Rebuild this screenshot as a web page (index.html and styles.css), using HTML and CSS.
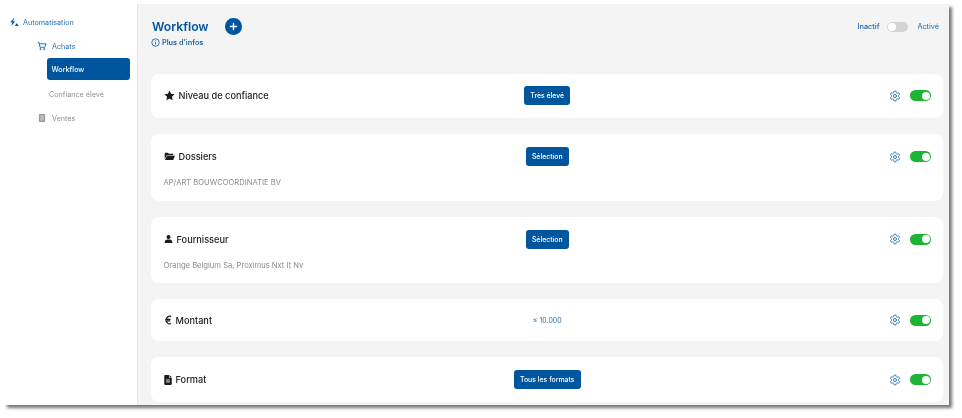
FILE: index.html
```html
<!DOCTYPE html>
<html lang="fr">
<head>
<meta charset="utf-8">
<title>Workflow</title>
<link rel="stylesheet" href="styles.css">
</head>
<body>
<svg class="defs" aria-hidden="true">
  <symbol id="gear" viewBox="0 0 24 24"><path d="M12.220 2h-.44a2 2 0 0 0-2 2v.18a2 2 0 0 1-1 1.730l-.43.25a2 2 0 0 1-2 0l-.15-.08a2 2 0 0 0-2.730.73l-.22.38a2 2 0 0 0 .73 2.730l.15.1a2 2 0 0 1 1 1.720v.51a2 2 0 0 1-1 1.740l-.15.09a2 2 0 0 0-.73 2.730l.22.38a2 2 0 0 0 2.730.73l.15-.08a2 2 0 0 1 2 0l.43.25a2 2 0 0 1 1 1.730V20a2 2 0 0 0 2 2h.44a2 2 0 0 0 2-2v-.18a2 2 0 0 1 1-1.730l.43-.25a2 2 0 0 1 2 0l.15.08a2 2 0 0 0 2.730-.73l.22-.39a2 2 0 0 0-.73-2.730l-.15-.08a2 2 0 0 1-1-1.740v-.5a2 2 0 0 1 1-1.740l.15-.09a2 2 0 0 0 .73-2.730l-.22-.38a2 2 0 0 0-2.730-.73l-.15.08a2 2 0 0 1-2 0l-.43-.25a2 2 0 0 1-1-1.730V4a2 2 0 0 0-2-2z" fill="none" stroke="#2f78b7" stroke-width="2"/><circle cx="12" cy="12" r="3" fill="none" stroke="#2f78b7" stroke-width="2"/></symbol>
</svg>
<div class="app">
  <nav class="sidebar">
    <div class="nav-item nav-root">
      <svg class="ic-auto" viewBox="0 0 16 16"><path d="M8.500 1 2 8.500h3.500L3.500 14.500 10 7H6.500z" fill="#00559f"/><path d="M12.500 9.500l3 5h-6z" fill="#00559f"/></svg>
      <span>Automatisation</span>
    </div>
    <div class="nav-item nav-group">
      <svg class="ic-nav" viewBox="0 0 16 16" fill="none" stroke="#00559f" stroke-width="1.300"><path d="M1 2h2.200l1.600 8h7.600L14.500 4.500H3.600"/><circle cx="5.500" cy="13" r="1"/><circle cx="11.500" cy="13" r="1"/></svg>
      <span>Achats</span>
    </div>
    <div class="nav-active">Workflow</div>
    <div class="nav-sub">Confiance élevé</div>
    <div class="nav-item nav-group nav-muted">
      <svg class="ic-nav" viewBox="0 0 16 16"><rect x="3" y="1.500" width="10" height="13" rx="1.500" fill="#9a9a9a"/><path d="M5 5h6M5 8h6M5 11h6" stroke="#fff" stroke-width="1"/></svg>
      <span>Ventes</span>
    </div>
  </nav>
  <main class="main">
    <header class="head">
      <div class="head-left">
        <div class="title-row">
          <h1>Workflow</h1>
          <button class="add" aria-label="Ajouter"><svg viewBox="0 0 16 16"><path d="M8 3.500v9M3.500 8h9" stroke="#fff" stroke-width="2" stroke-linecap="round"/></svg></button>
        </div>
        <div class="info">
          <svg viewBox="0 0 16 16" fill="none" stroke="#00559f" stroke-width="1.400"><circle cx="8" cy="8" r="6.600"/><path d="M8 7v4.500M8 4.200v1.400"/></svg>
          <span>Plus d'infos</span>
        </div>
      </div>
      <div class="legend">
        <span class="legend-off">Inactif</span>
        <span class="toggle-off"></span>
        <span class="legend-on">Activé</span>
      </div>
    </header>

    <section class="card">
      <div class="row">
        <div class="label">
          <svg class="ic" viewBox="0 0 16 16"><path d="M8 .8l2.200 4.700 5.100.7-3.700 3.500.9 5.100L8 12.400l-4.500 2.400.9-5.100L.7 6.200l5.100-.7z" fill="#1c1c1c"/></svg>
          <span>Niveau de confiance</span>
        </div>
        <button class="pill">Très élevé</button>
        <div class="actions">
          <svg class="gear"><use href="#gear"/></svg>
          <span class="toggle-on"></span>
        </div>
      </div>
    </section>

    <section class="card">
      <div class="row">
        <div class="label">
          <svg class="ic" viewBox="0 0 16 16"><path d="M1 3.500C1 3 1.400 2.500 2 2.500h3.600L7 4h5.500c.6 0 1 .4 1 1v1H4L1 11.500z" fill="#1c1c1c"/><path d="M4.300 7H16l-2.600 6H1.300z" fill="#1c1c1c"/></svg>
          <span>Dossiers</span>
        </div>
        <button class="pill">Sélection</button>
        <div class="actions">
          <svg class="gear"><use href="#gear"/></svg>
          <span class="toggle-on"></span>
        </div>
      </div>
      <p class="detail">AP/ART BOUWCOORDINATIE BV</p>
    </section>

    <section class="card">
      <div class="row">
        <div class="label label-tight">
          <svg class="ic ic-person" viewBox="0 0 16 16"><circle cx="8" cy="4.500" r="3.600" fill="#1c1c1c"/><path d="M1 15c0-4 2.500-6 5-6h4c2.500 0 5 2 5 6z" fill="#1c1c1c"/></svg>
          <span>Fournisseur</span>
        </div>
        <button class="pill">Sélection</button>
        <div class="actions">
          <svg class="gear"><use href="#gear"/></svg>
          <span class="toggle-on"></span>
        </div>
      </div>
      <p class="detail">Orange Belgium Sa, Proximus Nxt It Nv</p>
    </section>

    <section class="card">
      <div class="row">
        <div class="label label-tight">
          <svg class="ic ic-small" viewBox="0 0 12 16"><path d="M11 2.600C7.500 .8 4 3 3.300 7H1.500M10 7H1.500M9.500 9.500H1.500M3.300 9.500c.7 4 4.200 5.700 7.700 4" fill="none" stroke="#1c1c1c" stroke-width="2"/></svg>
          <span>Montant</span>
        </div>
        <span class="amount">≤ 10.000</span>
        <div class="actions">
          <svg class="gear"><use href="#gear"/></svg>
          <span class="toggle-on"></span>
        </div>
      </div>
    </section>

    <section class="card">
      <div class="row">
        <div class="label label-tight">
          <svg class="ic ic-small" viewBox="0 0 12 16"><path d="M1.500 0H7.500V4.500H12V14.500c0 .8-.7 1.500-1.500 1.500h-9C.7 16 0 15.300 0 14.500V1.500C0 .7.700 0 1.500 0zM8.500 0 12 3.500H8.500z" fill="#1c1c1c"/><path d="M3 8h6M3 11h6" stroke="#fff" stroke-width="1.400"/></svg>
          <span>Format</span>
        </div>
        <button class="pill">Tous les formats</button>
        <div class="actions">
          <svg class="gear"><use href="#gear"/></svg>
          <span class="toggle-on"></span>
        </div>
      </div>
    </section>
  </main>
</div>
</body>
</html>
```
FILE: styles.css
```css
* { box-sizing: border-box; }
html, body { margin: 0; height: 100%; background: #fff; overflow: hidden; }
body { font-family: Inter, "Liberation Sans", sans-serif; padding: 4px 0 0 4px; }
.defs { display: none; }

.app {
  display: flex;
  width: 945px;
  height: 401px;
  overflow: hidden;
  box-shadow: 3px 3px 3px #777;
  filter: blur(0.3px);
}

.sidebar {
  width: 134px;
  flex: none;
  background: #fff;
  border-right: 1px solid #e6e6e6;
  padding: 11px 7px 0 5px;
  font-size: 7.200px;
  color: #2a6fae;
}
.nav-item { display: flex; align-items: center; height: 14px; }
.nav-root { gap: 4px; }
.ic-auto { width: 10px; height: 10px; flex: none; }
.nav-group { margin: 10px 0 0 28px; height: 14px; gap: 5px; }
.ic-nav { width: 10px; height: 10px; flex: none; }
.nav-active {
  margin: 5px 0 0 37.500px;
  height: 22px;
  display: flex;
  align-items: center;
  padding-left: 5px;
  background: #00559f;
  border-radius: 3px;
  color: #fff;
  font-weight: 500;
}
.nav-sub { margin: 8.500px 0 0 40px; height: 12px; line-height: 12px; color: #8f8f8f; }
.nav-muted { margin-top: 10.500px; color: #8f8f8f; }

.main {
  flex: 1;
  min-width: 0;
  background: #f4f4f4;
  padding: 0 6px 0 12.500px;
}

.head { display: flex; justify-content: space-between; height: 69.500px; padding-top: 12.500px; }
.title-row { display: flex; align-items: center; gap: 16.500px; height: 20px; padding-left: 1.500px; }
h1 { margin: 0; font-size: 12.200px; line-height: 20px; font-weight: 600; color: #00559f; }
.add { width: 16.500px; height: 16.500px; padding: 0; border: 0; border-radius: 50%; background: #00559f; display: flex; align-items: center; justify-content: center; }
.add svg { width: 11px; height: 11px; }
.info { display: flex; align-items: center; gap: 2.500px; margin-top: 1.500px; font-size: 7.300px; font-weight: 600; color: #1d66a8; }
.info svg { width: 9px; height: 9px; }
.legend { display: flex; align-items: center; height: 20px; font-size: 7.300px; font-weight: 500; color: #1d66a8; padding-right: 4px; }
.legend-off { margin-right: 8px; }
.legend-on { margin-left: 9px; font-weight: 400; }
.toggle-off, .toggle-on { position: relative; display: block; border-radius: 6px; }
.toggle-off { width: 21px; height: 10px; background: #d4d4d4; }
.toggle-off::after { content: ""; position: absolute; left: 1px; top: 1px; width: 8px; height: 8px; border-radius: 50%; background: #fff; }
.toggle-on { width: 21px; height: 11px; background: #1ab534; }
.toggle-on::after { content: ""; position: absolute; right: 1.500px; top: 1.500px; width: 8px; height: 8px; border-radius: 50%; background: #fff; }

.card {
  background: #fff;
  border-radius: 8px;
  margin-bottom: 16px;
  padding: 12.500px 12px 0 13px;
  height: 44.500px;
}
.card:nth-of-type(2), .card:nth-of-type(3) { height: 66.500px; padding-top: 13px; }
.card:nth-of-type(4) { height: 42px; padding-top: 11.500px; }
.card:nth-of-type(5) { height: 45px; padding-top: 13px; }

.row { display: grid; grid-template-columns: 1fr auto 1fr; align-items: center; height: 19px; }
.label { display: flex; align-items: center; gap: 4px; font-size: 9.200px; font-weight: 500; color: #222; }
.label-tight { gap: 4px; }
.ic { width: 11px; height: 11px; flex: none; }
.ic-person { width: 9px; height: 10px; }
.ic-small { width: 8px; height: 10px; }
.pill {
  padding: 0 6px;
  height: 19px;
  border: 0;
  border-radius: 3px;
  background: #00559f;
  color: #fff;
  font: 500 6.900px Inter, "Liberation Sans", sans-serif;
}
.amount { font-size: 7px; color: #2a6fae; text-align: center; }
.actions { display: flex; align-items: center; justify-content: flex-end; gap: 9px; }
.gear { width: 12px; height: 12px; flex: none; }
.detail { margin: 12px 0 0; font-size: 7.600px; line-height: 10px; color: #8a8a8a; }
```
